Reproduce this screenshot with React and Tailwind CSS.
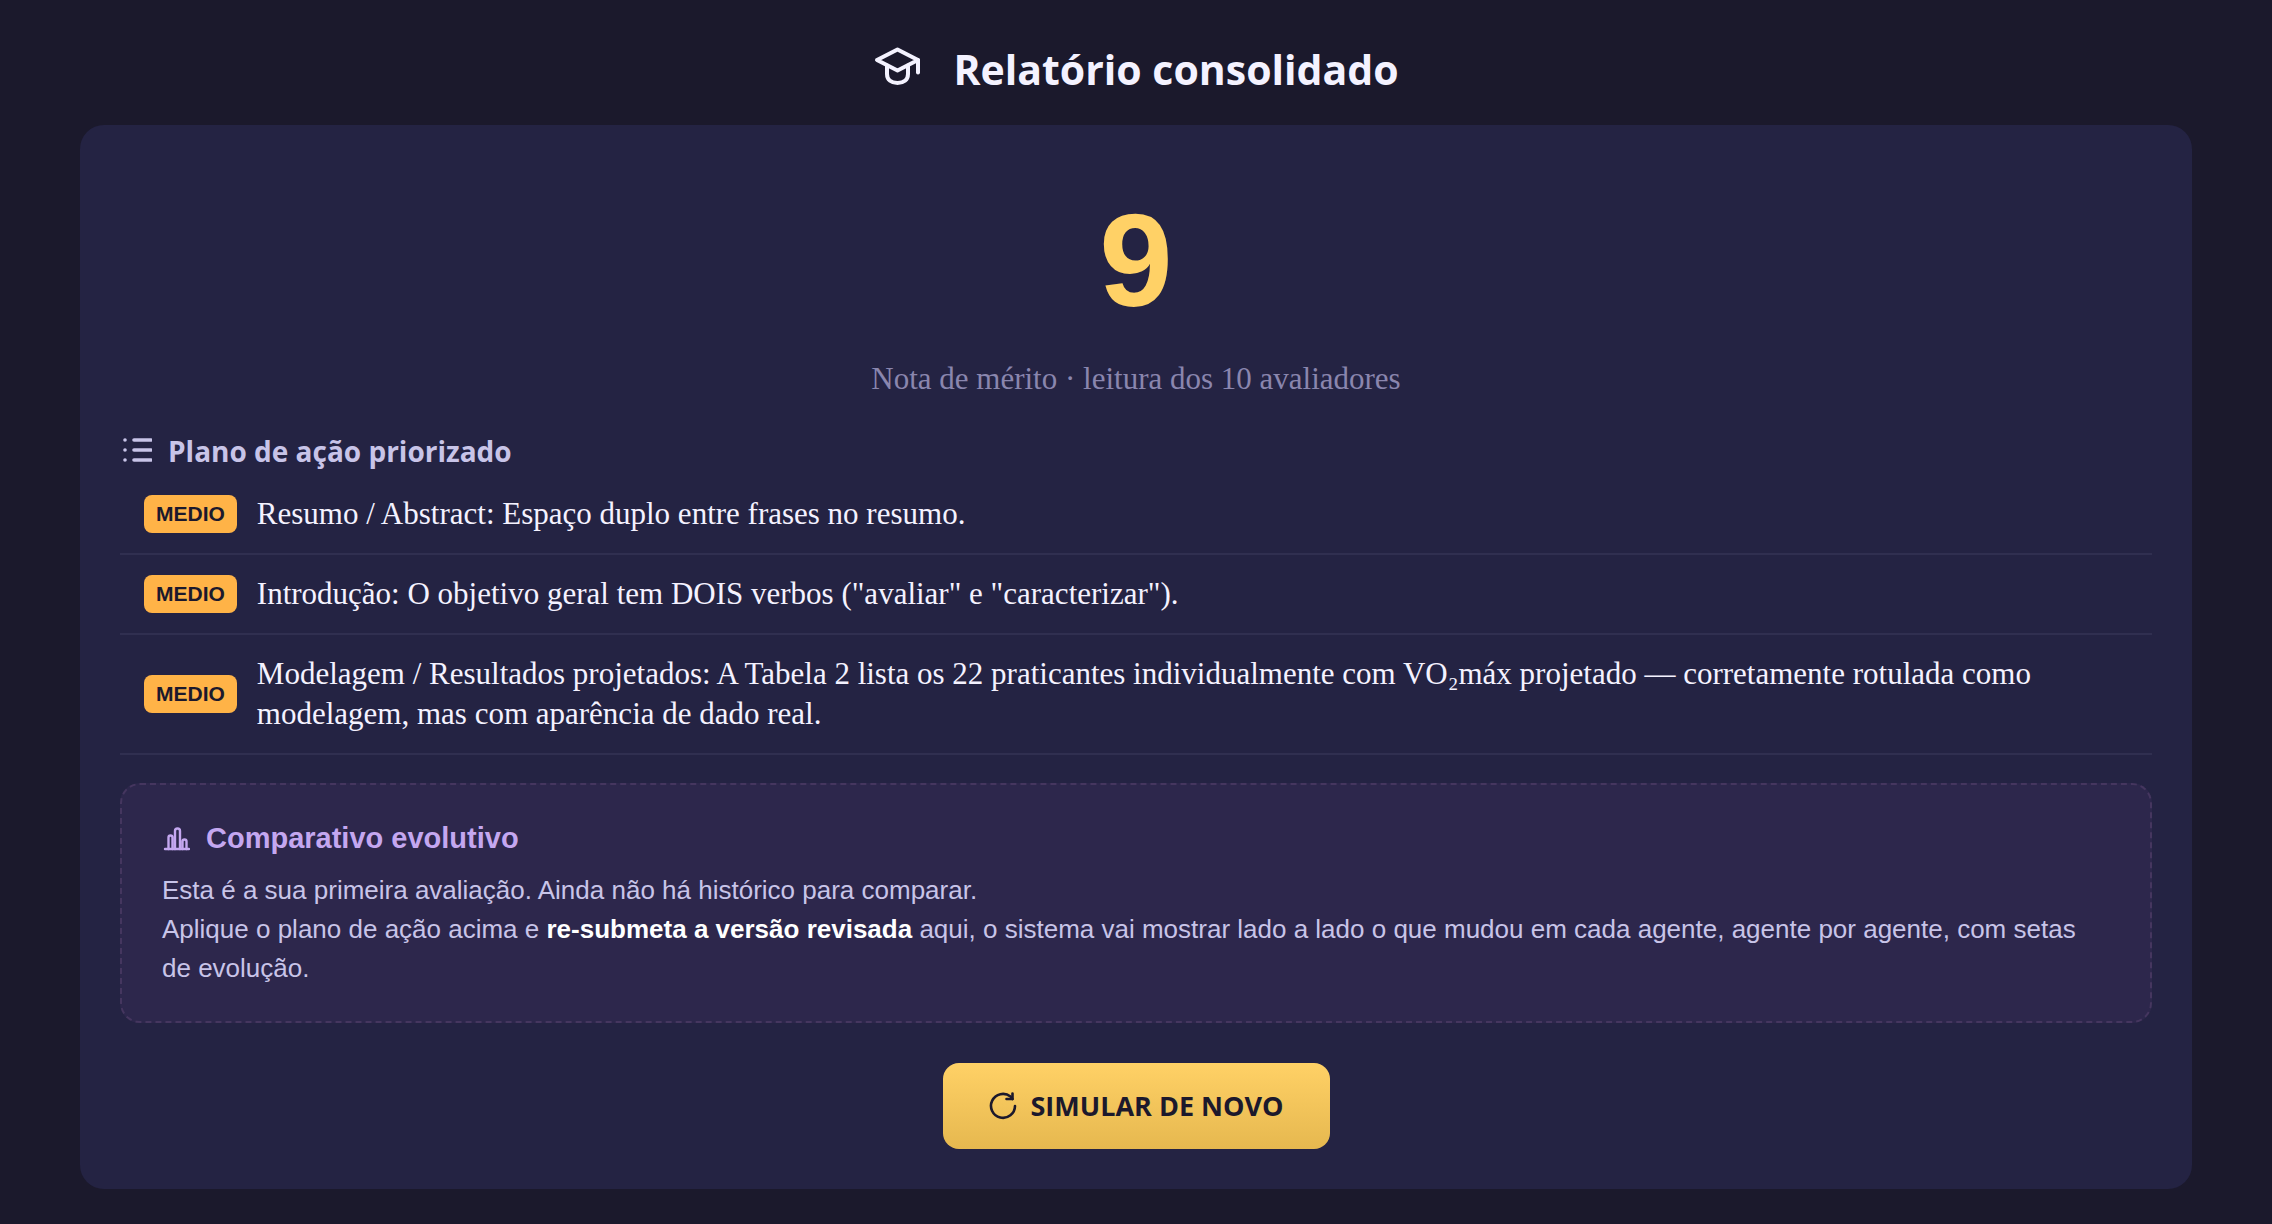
import React from 'react';

const ACTIONS = [
  { level: 'MEDIO', text: 'Resumo / Abstract: Espaço duplo entre frases no resumo.' },
  { level: 'MEDIO', text: 'Introdução: O objetivo geral tem DOIS verbos ("avaliar" e "caracterizar").' },
  {
    level: 'MEDIO',
    text: 'Modelagem / Resultados projetados: A Tabela 2 lista os 22 praticantes individualmente com VO₂máx projetado — corretamente rotulada como modelagem, mas com aparência de dado real.',
  },
];

const CapIcon = () => (
  <svg className="w-12 h-12 shrink-0" viewBox="0 0 48 48" fill="none" stroke="currentColor" strokeWidth="4" strokeLinecap="round" strokeLinejoin="round">
    <path d="M4 15 24.500 4.500l20.500 10.500-20.500 10.500z" />
    <path d="M14 20.500v8.500c0 6 4.500 9 10.500 9s10.500-3 10.500-9v-8.500" />
    <path d="M45 15v12.500" />
  </svg>
);

const ListIcon = () => (
  <svg className="w-8 h-8 shrink-0" viewBox="0 0 32 32" fill="none" stroke="currentColor" strokeWidth="3.6" strokeLinecap="round">
    <path d="M14 5h17M14 15h17M14 25h17" />
    <path d="M5 5h.01M5 15h.01M5 25h.01" />
  </svg>
);

const ChartIcon = () => (
  <svg className="w-7 h-7 shrink-0" viewBox="0 0 28 28" fill="none" stroke="currentColor" strokeWidth="2.4" strokeLinecap="round" strokeLinejoin="round">
    <path d="M3 25h24" />
    <path d="M6.500 25V13.500q0-2 2-2t2 2V25M13 25V7q0-2.500 2.500-2.500T18 7v18M20.500 25v-7.500q0-2 2-2t2 2V25" />
  </svg>
);

const RedoIcon = () => (
  <svg className="w-7 h-7 shrink-0" viewBox="0 0 28 28" fill="none" stroke="currentColor" strokeWidth="2.6" strokeLinecap="round" strokeLinejoin="round">
    <path d="M26 14A12 12 0 1 1 21.500 4.500L23.500 7" />
    <path d="M23.500 1.500v5.500h-6" />
  </svg>
);

export default function ConsolidatedReport() {
  return (
    <div className="min-h-screen bg-[#1b192c] px-20 pt-[39px] pb-[35px] font-['Liberation_Sans',sans-serif]">

      {/* ─── Header ─── */}
      <header className="flex items-center justify-center gap-8 pb-[26px] text-[#f4f2ff]">
        <CapIcon />
        <h1 className="text-[41px] leading-[60px] font-bold font-['Open_Sans',sans-serif]">Relatório consolidado</h1>
      </header>

      <main className="rounded-3xl bg-[#242343] px-10 pt-[72px] pb-10">

        {/* ─── Score ─── */}
        <section className="text-center">
          <div className="text-[132px] leading-[128px] font-bold text-[#ffd166]">9</div>
          <p className="mt-[34px] text-[31px] leading-[40px] text-[#8a86ae] font-['Liberation_Serif',serif]">
            Nota de mérito · leitura dos 10 avaliadores
          </p>
        </section>

        {/* ─── Action plan ─── */}
        <section className="mt-8">
          <h2 className="flex items-center gap-4 text-[28px] leading-[40px] font-bold text-[#c8c4e8] font-['Open_Sans',sans-serif]">
            <ListIcon />
            Plano de ação priorizado
          </h2>
          <ul className="mt-1">
            {ACTIONS.map((a, i) => (
              <li key={i} className="flex items-center gap-5 border-b-2 border-[#302f50] px-6 py-[19px]">
                <span className="shrink-0 rounded-lg bg-[#ffb347] px-3 text-[21px] leading-[38px] font-bold text-[#1c192c]">{a.level}</span>
                <p className="text-[31px] leading-[40px] text-[#f4f2ff] font-['Liberation_Serif',serif]">{a.text}</p>
              </li>
            ))}
          </ul>
        </section>

        {/* ─── Comparison ─── */}
        <section className="mt-7 rounded-[20px] border-2 border-dashed border-[#45365f] bg-[#2d274c] px-10 py-[33px]">
          <h2 className="flex items-center gap-4 text-[29px] leading-[40px] font-bold text-[#c4a7f0]">
            <ChartIcon />
            Comparativo evolutivo
          </h2>
          <p className="mt-[13px] text-[26px] leading-[39px] text-[#c8c4e8]">
            Esta é a sua primeira avaliação. Ainda não há histórico para comparar.
            <br />
            Aplique o plano de ação acima e <strong className="font-bold text-white">re-submeta a versão revisada</strong> aqui, o sistema vai mostrar lado a lado o que mudou em cada agente, agente por agente, com setas de evolução.
          </p>
        </section>

        <div className="mt-10 flex justify-center">
          <button type="button" className="flex items-center gap-[14px] rounded-2xl bg-linear-to-b from-[#ffd166] to-[#e6b84f] px-[46px] py-[23px] text-[27px] leading-[40px] font-bold text-[#1c192c] font-['Open_Sans',sans-serif]">
            <RedoIcon />
            SIMULAR DE NOVO
          </button>
        </div>
      </main>
    </div>
  );
}
